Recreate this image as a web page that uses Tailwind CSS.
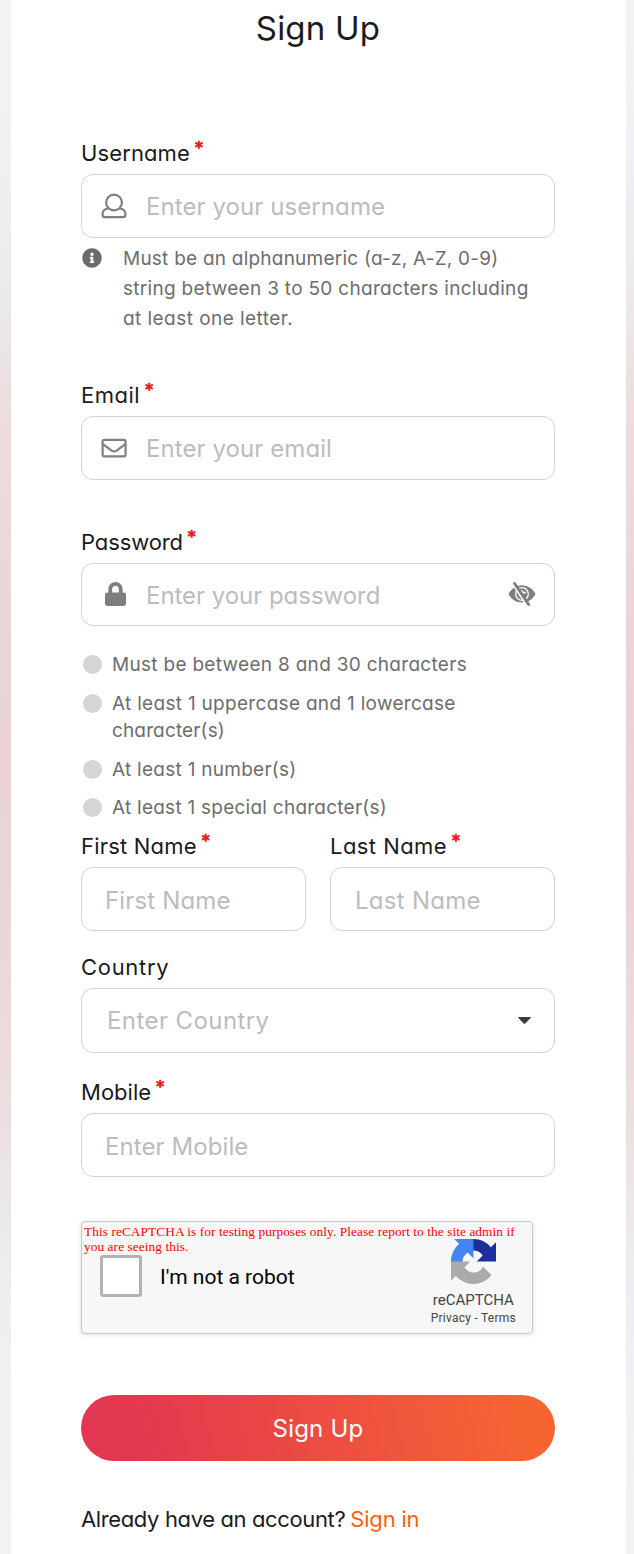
<!DOCTYPE html>
<html lang="en">
<head>
<meta charset="utf-8">
<title>Sign Up</title>
<script src="https://cdn.jsdelivr.net/npm/@tailwindcss/browser@4"></script>
</head>
<body class="h-[1554px] overflow-hidden bg-[linear-gradient(to_bottom,#f1f4f2_0%,#eff0f4_11%,#ece8ea_20%,#ecdedd_26%,#ebd7d6_37%,#ead3d2_49%,#ebd7d6_61%,#ecdfdf_72%,#ece8ea_78%,#eeeff3_84%,#f1f3f2_98%)] font-[Inter,sans-serif] text-[#1b1b1b] [font-feature-settings:'cv11']">
<main class="ml-[11px] flex h-[1554px] w-[615px] flex-col bg-white pr-[71px] pl-[70px]">
  <h1 class="h-[137px] pt-[8px] text-center text-[33px] leading-[40px] tracking-[0.21px]">Sign Up</h1>

  <label class="flex h-[37px] shrink-0 text-[22px] leading-[33px]"><span class="tracking-[0.12px]">Username</span><span class="ml-[5px] font-[DejaVu_Sans] text-[15px] leading-[23px] font-bold text-[#e01b22] [-webkit-text-stroke:0.7px_#e01b22]">*</span></label>
  <div class="flex h-16 shrink-0 items-center rounded-[12px] border border-[#d3d3d3] pl-[19px]">
    <svg class="h-[26px] w-[26px]" viewBox="0 0 26 26" fill="none" stroke="#808080" stroke-width="2.2"><circle cx="13" cy="9.500" r="7.900"/><path d="M7.600 15.500C3.800 15.800 1.600 17.800 1.600 20.800v.9c0 1.600.8 2.400 2.400 2.400h18c1.600 0 2.400-.8 2.400-2.400v-.9c0-3-2.200-5-6-5.300"/></svg>
    <span class="mt-[2px] ml-[19px] text-2xl tracking-[0.08px] text-[#bcbcbc]">Enter your username</span>
  </div>
  <div class="mt-[6px] flex h-[135px] shrink-0 text-[19px] leading-[30px] text-[#6d6d6d]">
    <svg class="mt-[4px] ml-px h-[20px] w-[20px] shrink-0" viewBox="0 0 512 512" fill="#6b6b6b"><path d="M256 8C119 8 8 119 8 256s111 248 248 248 248-111 248-248S393 8 256 8zm0 110c23.200 0 42 18.800 42 42s-18.800 42-42 42-42-18.800-42-42 18.800-42 42-42zm56 254c0 6.600-5.400 12-12 12h-88c-6.600 0-12-5.400-12-12v-24c0-6.600 5.400-12 12-12h12v-64h-12c-6.600 0-12-5.400-12-12v-24c0-6.600 5.400-12 12-12h64c6.600 0 12 5.400 12 12v100h12c6.600 0 12 5.400 12 12v24z"/></svg>
    <p class="ml-[21px] whitespace-nowrap"><span class="tracking-[0.23px]">Must be an alphanumeric (a-z, A-Z, 0-9)</span><br><span class="tracking-[0.3px]">string between 3 to 50 characters including</span><br><span class="tracking-[0.45px]">at least one letter.</span></p>
  </div>

  <label class="flex h-[37px] shrink-0 text-[22px] leading-[33px]"><span class="tracking-[0.5px]">Email</span><span class="ml-[5px] font-[DejaVu_Sans] text-[15px] leading-[23px] font-bold text-[#e01b22] [-webkit-text-stroke:0.7px_#e01b22]">*</span></label>
  <div class="flex h-16 shrink-0 items-center rounded-[12px] border border-[#d3d3d3] pl-[19px]">
    <svg class="h-[26px] w-[26px]" viewBox="0 0 26 26" fill="none" stroke="#808080" stroke-width="2.200"><rect x="1.600" y="4.800" width="23" height="16.500" rx="1.800"/><path d="M1.600 8.800l8.600 6.500c2 1.500 3.800 1.500 5.800 0l8.600-6.500"/></svg>
    <span class="mt-[2px] ml-[19px] text-2xl tracking-[0.08px] text-[#bcbcbc]">Enter your email</span>
  </div>

  <label class="mt-[46px] flex h-[37px] shrink-0 text-[22px] leading-[33px]"><span class="tracking-[-0.12px]">Password</span><span class="ml-[5px] font-[DejaVu_Sans] text-[15px] leading-[23px] font-bold text-[#e01b22] [-webkit-text-stroke:0.7px_#e01b22]">*</span></label>
  <div class="flex h-[63px] shrink-0 items-center rounded-[12px] border border-[#d3d3d3] pr-[18px] pl-[23px]">
    <svg class="-mt-[2px] h-6 w-[21px]" viewBox="0 0 448 512" fill="#7e7e7e"><path d="M400 224h-24v-72C376 68.200 307.800 0 224 0S72 68.200 72 152v72H48c-26.500 0-48 21.500-48 48v192c0 26.500 21.500 48 48 48h352c26.500 0 48-21.500 48-48V272c0-26.500-21.500-48-48-48zm-104 0H152v-72c0-39.700 32.300-72 72-72s72 32.300 72 72v72z"/></svg>
    <span class="mt-[2px] ml-[20px] text-2xl tracking-[-0.04px] text-[#bcbcbc]">Enter your password</span>
    <svg class="-mt-[2px] ml-auto h-6 w-[28px]" viewBox="0 0 28 24"><path d="M.5 12C4 5.800 8.500 3.600 14 3.600S24 5.800 27.500 12C24 18.200 19.500 20.400 14 20.400S4 18.200.5 12z" fill="#7e7e7e"/><circle cx="14" cy="12" r="6.300" fill="none" stroke="#fff" stroke-width="1.300"/><path d="M14 8.200a2 2 0 0 0 3.600 1.600" fill="none" stroke="#fff" stroke-width="1.800"/><path d="M4.500 1.500l14 21.500" stroke="#fff" stroke-width="2.200"/><path d="M6.600 1.500l14 21" stroke="#7e7e7e" stroke-width="2.800" stroke-linecap="round"/></svg>
  </div>

  <ul class="mt-[25px] flex h-[179px] shrink-0 flex-col text-[19px] leading-[27px] whitespace-nowrap text-[#6d6d6d]">
    <li class="mb-3 flex gap-[10px]"><i class="mt-1 ml-[2px] h-[19px] w-[19px] rounded-full bg-[#d3d5d7]"></i><span class="tracking-[0.3px]">Must be between 8 and 30 characters</span></li>
    <li class="mb-3 flex gap-[10px]"><i class="mt-1 ml-[2px] h-[19px] w-[19px] rounded-full bg-[#d3d5d7]"></i><span><span class="tracking-[0.3px]">At least 1 uppercase and 1 lowercase</span><br><span class="tracking-[0.14px]">character(s)</span></span></li>
    <li class="mb-[11px] flex gap-[10px]"><i class="mt-1 ml-[2px] h-[19px] w-[19px] rounded-full bg-[#d3d5d7]"></i><span class="tracking-[0.27px]">At least 1 number(s)</span></li>
    <li class="flex gap-[10px]"><i class="mt-1 ml-[2px] h-[19px] w-[19px] rounded-full bg-[#d3d5d7]"></i><span class="tracking-[0.25px]">At least 1 special character(s)</span></li>
  </ul>

  <div class="grid shrink-0 grid-cols-2 gap-6">
    <div>
      <label class="flex h-[37px] text-[22px] leading-[33px]"><span class="tracking-[0.2px]">First Name</span><span class="ml-[5px] font-[DejaVu_Sans] text-[15px] leading-[23px] font-bold text-[#e01b22] [-webkit-text-stroke:0.7px_#e01b22]">*</span></label>
      <div class="flex h-16 items-center rounded-[12px] border border-[#d3d3d3] pt-[3px] pl-[23px] text-2xl tracking-[0.15px] text-[#bcbcbc]">First Name</div>
    </div>
    <div>
      <label class="flex h-[37px] text-[22px] leading-[33px]"><span class="tracking-[0.45px]">Last Name</span><span class="ml-[5px] font-[DejaVu_Sans] text-[15px] leading-[23px] font-bold text-[#e01b22] [-webkit-text-stroke:0.7px_#e01b22]">*</span></label>
      <div class="flex h-16 items-center rounded-[12px] border border-[#d3d3d3] pt-[3px] pl-6 text-2xl tracking-[0.28px] text-[#bcbcbc]">Last Name</div>
    </div>
  </div>

  <label class="mt-5 flex h-[37px] shrink-0 text-[22px] leading-[33px]"><span class="tracking-[0.7px]">Country</span></label>
  <div class="flex h-[65px] shrink-0 items-center justify-between rounded-[12px] border border-[#d3d3d3] pr-[23px] pl-[25px]">
    <span class="text-2xl tracking-[0.42px] text-[#bcbcbc]">Enter Country</span>
    <svg class="h-[7px] w-[13px]" viewBox="0 0 13 7"><path d="M.7 0h11.600q1 0 .3.900L7.300 6.500q-.8.700-1.600 0L.4.900Q-.3 0 .7 0z" fill="#3c3c3c"/></svg>
  </div>

  <label class="mt-[23px] flex h-[37px] shrink-0 text-[22px] leading-[33px]"><span class="tracking-[0.02px]">Mobile</span><span class="ml-[5px] font-[DejaVu_Sans] text-[15px] leading-[23px] font-bold text-[#e01b22] [-webkit-text-stroke:0.7px_#e01b22]">*</span></label>
  <div class="flex h-16 shrink-0 items-center rounded-[12px] border border-[#d3d3d3] pt-[3px] pl-[23px] text-2xl tracking-[0.08px] text-[#bcbcbc]">Enter Mobile</div>

  <div class="relative mt-11 h-[113px] w-[452px] shrink-0 rounded-[4px] border border-[#c8c8c8] bg-[#f7f7f7] shadow-[0_1px_5px_rgba(0,0,0,0.12)]">
    <p class="absolute top-[2px] left-[2px] font-[Liberation_Serif] text-[13.33px] leading-[15px] tracking-[0.075px] whitespace-nowrap text-[#f00]">This reCAPTCHA is for testing purposes only. Please report to the site admin if<br>you are seeing this.</p>
    <div class="flex pt-[17px] pr-[16px] pl-[18px]">
      <span class="mt-4 h-[42px] w-[42px] rounded-[3px] border-[3px] border-[#b2b2b2] bg-white"></span>
      <span class="mt-[23px] ml-[18px] font-[Roboto] text-[21px] leading-[30px] text-black">I'm not a robot</span>
      <div class="ml-auto flex flex-col items-center font-[Roboto] text-[#444]">
        <svg class="h-[45px] w-[45px]" viewBox="0 0 64 64"><path fill="#1c2f9b" d="M64 31.955l-.033-1.370V4.687l-7.160 7.160C50.948 4.674 42.033.093 32.050.093c-10.400 0-19.622 4.960-25.458 12.640l11.736 11.860a15.550 15.550 0 0 1 4.754-5.334c2.050-1.600 4.952-2.906 8.968-2.906.485 0 .860.057 1.135.163 4.976.393 9.288 3.140 11.828 7.124l-8.307 8.307L64 31.953"/><path fill="#4285f4" d="M31.862.094l-1.370.033H4.594l7.160 7.160C4.580 13.147 0 22.060 0 32.046c0 10.400 4.960 19.622 12.640 25.458L24.500 45.768a15.550 15.550 0 0 1-5.334-4.754c-1.600-2.050-2.906-4.952-2.906-8.968 0-.485.057-.860.163-1.135.393-4.976 3.140-9.288 7.124-11.828l8.307 8.307L31.860.095"/><path fill="#ababab" d="M.001 32.045l.033 1.370v25.898l7.160-7.160c5.860 7.173 14.774 11.754 24.760 11.754 10.400 0 19.622-4.960 25.458-12.640l-11.736-11.860a15.550 15.550 0 0 1-4.754 5.334c-2.050 1.600-4.952 2.906-8.968 2.906-.485 0-.860-.057-1.135-.163-4.976-.393-9.288-3.140-11.828-7.124l8.307-8.307c-10.522.040-22.400.066-27.295-.005"/></svg>
        <span class="mt-[6px] text-[15px] leading-[20px]">reCAPTCHA</span>
        <span class="text-[12px] leading-[16px] tracking-[0.25px]">Privacy - Terms</span>
      </div>
    </div>
  </div>

  <button class="mt-[61px] h-[66px] shrink-0 rounded-full bg-[linear-gradient(75deg,#e33651_10%,#f66432_92%)] pt-[2px] text-2xl tracking-[0.21px] text-white">Sign Up</button>

  <p class="mt-[42px] shrink-0 text-[22px] leading-[33px] whitespace-nowrap"><span class="tracking-[-0.37px]">Already have an account?</span><span class="ml-[5px] tracking-[-0.2px] text-[#ff6108]">Sign in</span></p>
</main>
</body>
</html>
